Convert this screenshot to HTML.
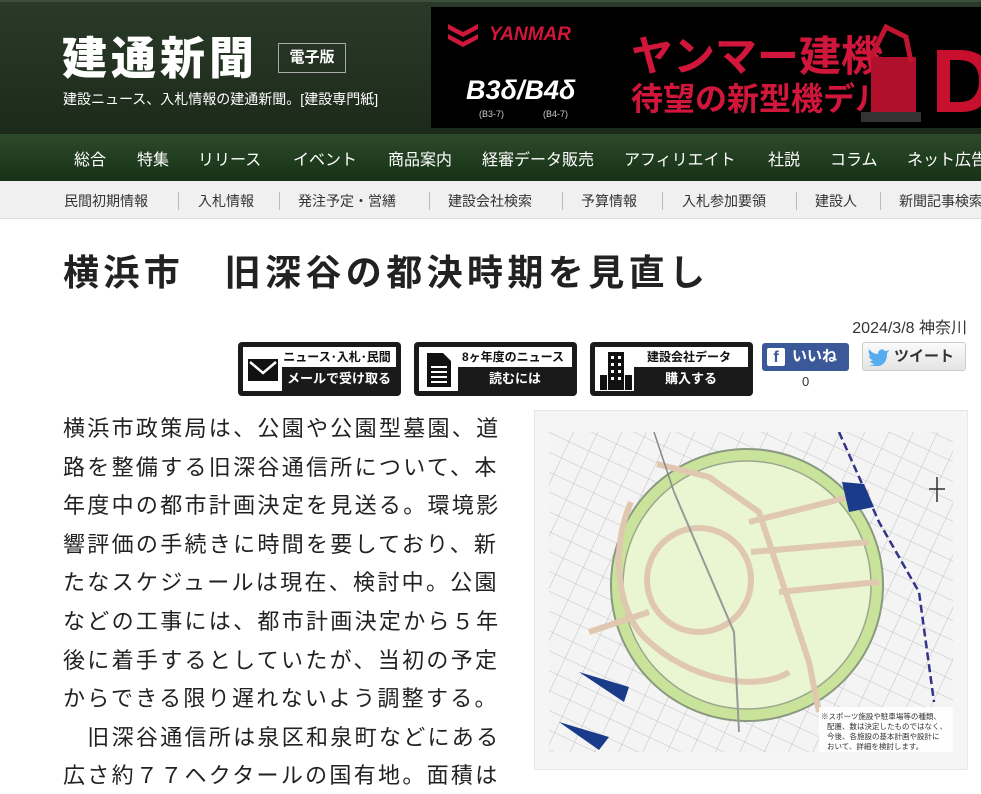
<!DOCTYPE html>
<html><head><meta charset="utf-8"><style>
*{margin:0;padding:0;box-sizing:border-box}
body{width:981px;height:768px;overflow:hidden;background:#fff;font-family:"Liberation Sans","Noto Sans CJK JP",sans-serif;color:#222;position:relative;white-space:nowrap}
.abs{position:absolute}
#hdr{left:0;top:0;width:981px;height:134px;background:linear-gradient(#2a3a28,#1c2a1a);border-top:2px solid #3d4e3a}
#logo{left:62px;top:28px;font-size:45px;font-weight:900;color:#fff;letter-spacing:4px;font-family:"Noto Sans CJK JP",sans-serif;line-height:54px}
#ed{left:278px;top:43px;width:68px;height:30px;border:1px solid #aaa;color:#fff;font-size:15px;font-weight:bold;text-align:center;line-height:28px}
#tag{left:63px;top:89px;color:#fff;font-size:14px}
#ban{left:431px;top:7px;width:550px;height:121px;background:#000;overflow:hidden}
#nav{left:0;top:134px;width:981px;height:47px;background:linear-gradient(#2d4a2a,#173217)}
#nav span{position:absolute;top:12px;color:#fff;font-size:16px}
#sub{left:0;top:181px;width:981px;height:38px;background:#f0f0f0;border-bottom:1px solid #ddd}
#sub span{position:absolute;top:10px;font-size:14px;color:#333}
#sub i{position:absolute;top:11px;width:1px;height:18px;background:#bbb}
h1{position:absolute;left:63px;top:245px;font-size:36px;font-weight:bold;color:#222;font-family:"Noto Sans CJK JP",sans-serif;letter-spacing:4.4px;line-height:50px}
.btn{position:absolute;top:342px;width:163px;height:54px;background:#1a1a1a;border-radius:4px}
.btn .w{position:absolute;left:5px;top:5px;width:153px;height:44px;background:#fff}
.btn .t1{position:absolute;left:44px;top:6px;width:110px;height:18px;font-size:12px;font-weight:bold;text-align:center;color:#111}
.btn .t2{position:absolute;left:44px;top:25px;width:114px;height:24px;background:#1a1a1a;color:#fff;font-size:13px;font-weight:bold;text-align:center;line-height:24px}
#body{left:63px;top:408px;width:440px;font-size:22px;line-height:38.6px;color:#222;letter-spacing:2.3px;font-family:"Noto Sans CJK JP",sans-serif}
#body div{white-space:nowrap;height:38.6px}
#fig{left:534px;top:410px;width:434px;height:360px;background:#f5f5f5;border:1px solid #e6e6e6}
</style></head><body>
<div id="hdr" class="abs"></div>
<div id="logo" class="abs">建通新聞</div>
<div id="ed" class="abs">電子版</div>
<div id="tag" class="abs">建設ニュース、入札情報の建通新聞。[建設専門紙]</div>
<div id="ban" class="abs">
<svg width="550" height="121" style="position:absolute;left:0;top:0">
<path d="M17 17 L32 25 L47 17 L47 22 L32 30 L17 22Z M17 27 L32 35 L47 27 L47 32 L32 40 L17 32Z" fill="#d0163a"/>
<text x="58" y="33" fill="#d0163a" font-size="19" font-weight="bold" font-style="italic" font-family="Liberation Sans">YANMAR</text>
<text x="35" y="92" fill="#fff" font-size="27" font-weight="bold" font-style="italic" font-family="Liberation Sans">B3δ/B4δ</text>
<text x="48" y="110" fill="#ccc" font-size="9" font-family="Liberation Sans">(B3-7)</text>
<text x="112" y="110" fill="#ccc" font-size="9" font-family="Liberation Sans">(B4-7)</text>
<text x="200" y="64" fill="#d0163a" font-size="42" font-weight="bold" font-family="Noto Sans CJK JP">ヤンマー建機</text>
<text x="200" y="103" fill="#d0163a" font-size="32" font-weight="bold" font-family="Noto Sans CJK JP">待望の新型機デルタ</text>
<rect x="440" y="50" width="45" height="55" fill="#b0102c"/>
<path d="M440 50 L455 20 L475 30 L480 55" stroke="#c01530" stroke-width="5" fill="none"/>
<rect x="430" y="105" width="60" height="10" fill="#333"/>
<text x="500" y="105" fill="#c8102e" font-size="90" font-weight="bold" font-family="Liberation Sans">D</text>
</svg></div>
<div id="nav" class="abs">
<span style="left:74px">総合</span><span style="left:137px">特集</span><span style="left:198px">リリース</span><span style="left:293px">イベント</span><span style="left:388px">商品案内</span><span style="left:482px">経審データ販売</span><span style="left:624px">アフィリエイト</span><span style="left:768px">社説</span><span style="left:830px">コラム</span><span style="left:907px">ネット広告</span>
</div>
<div id="sub" class="abs">
<span style="left:64px">民間初期情報</span><i style="left:178px"></i><span style="left:198px">入札情報</span><i style="left:279px"></i><span style="left:298px">発注予定・営繕</span><i style="left:429px"></i><span style="left:448px">建設会社検索</span><i style="left:562px"></i><span style="left:581px">予算情報</span><i style="left:662px"></i><span style="left:682px">入札参加要領</span><i style="left:796px"></i><span style="left:815px">建設人</span><i style="left:880px"></i><span style="left:899px">新聞記事検索</span>
</div>
<h1>横浜市　旧深谷の都決時期を見直し</h1>
<div class="abs" style="right:14px;top:314px;font-size:16px;color:#333">2024/3/8 神奈川</div>
<div class="btn" style="left:238px"><div class="w"></div>
<svg class="abs" style="left:9px;top:16px" width="32" height="24"><rect x="1" y="1" width="30" height="22" fill="#111"/><path d="M3 4 L16 15 L29 4" stroke="#fff" stroke-width="2.5" fill="none"/></svg>
<div class="t1">ニュース･入札･民間</div><div class="t2">メールで受け取る</div></div>
<div class="btn" style="left:414px"><div class="w"></div>
<svg class="abs" style="left:12px;top:10px" width="26" height="36"><path d="M1 1 H17 L25 9 V35 H1Z" fill="#111"/><g stroke="#fff" stroke-width="2"><line x1="5" y1="15" x2="21" y2="15"/><line x1="5" y1="20" x2="21" y2="20"/><line x1="5" y1="25" x2="21" y2="25"/><line x1="5" y1="30" x2="21" y2="30"/></g></svg>
<div class="t1">8ヶ年度のニュース</div><div class="t2">読むには</div></div>
<div class="btn" style="left:590px"><div class="w"></div>
<svg class="abs" style="left:8px;top:9px" width="34" height="40"><rect x="10" y="1" width="16" height="38" fill="#111"/><rect x="2" y="24" width="7" height="15" fill="#111"/><rect x="27" y="24" width="7" height="15" fill="#111"/><g fill="#fff"><rect x="13" y="5" width="3" height="3"/><rect x="20" y="5" width="3" height="3"/><rect x="13" y="12" width="3" height="3"/><rect x="20" y="12" width="3" height="3"/><rect x="13" y="19" width="3" height="3"/><rect x="20" y="19" width="3" height="3"/><rect x="13" y="26" width="3" height="3"/><rect x="20" y="26" width="3" height="3"/></g></svg>
<div class="t1">建設会社データ</div><div class="t2">購入する</div></div>
<div class="abs" style="left:762px;top:343px;width:87px;height:28px;background:#3b5998;border-radius:3px;color:#fff;font-size:15px;font-weight:bold;line-height:28px">
<span style="position:absolute;left:5px;top:5px;width:18px;height:18px;background:#fff;border-radius:2px;color:#3b5998;font-size:16px;line-height:20px;text-align:center;font-family:'Liberation Sans'">f</span><span style="position:absolute;left:30px">いいね</span></div>
<div class="abs" style="left:802px;top:374px;font-size:13px;color:#333">0</div>
<div class="abs" style="left:862px;top:342px;width:104px;height:29px;background:linear-gradient(#fafafa,#e4e4e4);border:1px solid #ccc;border-radius:3px;font-size:15px;font-weight:bold;color:#333;line-height:27px">
<svg class="abs" style="left:5px;top:5px" width="22" height="18"><path d="M21 2 C19 3 18 3 17 3 C15 0 10 1 10 6 C6 6 3 4 1 1 C0 4 1 7 3 8 C2 8 1 8 1 7 C1 10 3 12 5 12 C4 13 3 13 2 13 C3 15 5 16 7 16 C5 17 3 18 0 17 C10 22 20 16 19 5 C20 4 21 3 21 2Z" fill="#55acee"/></svg>
<span style="position:absolute;left:31px">ツイート</span></div>
<div id="body" class="abs">
<div>横浜市政策局は、公園や公園型墓園、道</div>
<div>路を整備する旧深谷通信所について、本</div>
<div>年度中の都市計画決定を見送る。環境影</div>
<div>響評価の手続きに時間を要しており、新</div>
<div>たなスケジュールは現在、検討中。公園</div>
<div>などの工事には、都市計画決定から５年</div>
<div>後に着手するとしていたが、当初の予定</div>
<div>からできる限り遅れないよう調整する。</div>
<div>　旧深谷通信所は泉区和泉町などにある</div>
<div>広さ約７７ヘクタールの国有地。面積は</div>
</div>
<div id="fig" class="abs"></div>
<svg class="abs" style="left:549px;top:432px" width="404" height="320">
<defs><pattern id="p" width="22" height="18" patternUnits="userSpaceOnUse" patternTransform="rotate(25)"><rect width="22" height="18" fill="#f4f4f4"/><path d="M0 0H22M0 0V18" stroke="#b5b5b5" stroke-width="0.8"/></pattern></defs>
<rect width="404" height="320" fill="url(#p)"/>
<circle cx="198" cy="153" r="136" fill="#c9e39a" stroke="#8a9a80" stroke-width="2"/>
<circle cx="198" cy="153" r="124" fill="#eaf5d2" stroke="#9aa890" stroke-width="1.5"/>
<g stroke="#e0c8b0" stroke-width="6" fill="none">
<circle cx="150" cy="148" r="52"/>
<path d="M108 32 L160 45 L210 80 L260 230 L270 280"/>
<path d="M82 70 C60 120 70 180 95 205 C140 250 210 260 240 240"/>
<path d="M200 90 L320 60 M202 120 L320 110 M230 160 L330 150 M100 180 L40 200"/>
</g>
<line x1="105" y1="0" x2="125" y2="60" stroke="#888" stroke-width="1.5"/>
<path d="M125 60 L185 200 L190 300" stroke="#999" stroke-width="2" fill="none"/>
<path d="M290 0 L330 90 L370 160 L385 270" stroke="#33338a" stroke-width="2.5" stroke-dasharray="8,4" fill="none"/>
<path d="M293 50 L315 52 L325 75 L300 80Z M30 240 L80 255 L75 270Z M10 290 L60 305 L50 318Z" fill="#1a3a8a"/>
<path d="M388 45 V70 M380 57 H396" stroke="#333" stroke-width="1.5"/>
<rect x="270" y="275" width="134" height="45" fill="#fff" opacity="0.9"/>
<text x="272" y="287" font-size="7.5" fill="#333" font-family="Noto Sans CJK JP">※スポーツ施設や駐車場等の種類、</text>
<text x="278" y="297" font-size="7.5" fill="#333" font-family="Noto Sans CJK JP">配置、数は決定したものではなく、</text>
<text x="278" y="307" font-size="7.5" fill="#333" font-family="Noto Sans CJK JP">今後、各施設の基本計画や設計に</text>
<text x="278" y="317" font-size="7.5" fill="#333" font-family="Noto Sans CJK JP">おいて、詳細を検討します。</text>
</svg>
</body></html>
